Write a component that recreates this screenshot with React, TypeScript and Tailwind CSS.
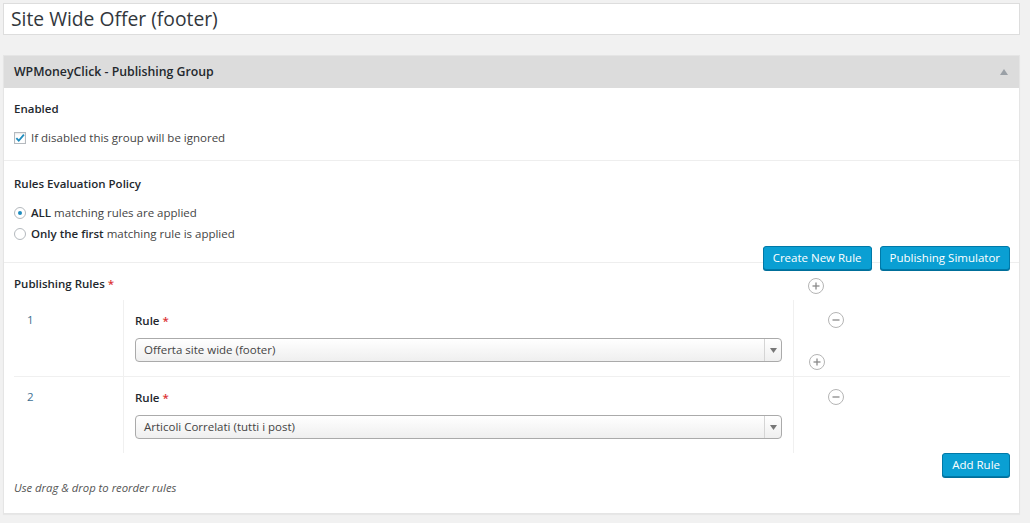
import React from "react";

const font = { fontFamily: '"Open Sans", "Noto Sans", sans-serif' };

const CircleBtn = ({ kind }: { kind: "plus" | "minus" }) => (
  <span className="flex h-[16px] w-[16px] items-center justify-center rounded-full border border-[#b5b5b5] bg-white">
    <svg width="10" height="10" viewBox="0 0 10 10">
      <path d="M1.5 5h7" stroke="#8a8a8a" strokeWidth="1.3" />
      {kind === "plus" && <path d="M5 1.5v7" stroke="#8a8a8a" strokeWidth="1.3" />}
    </svg>
  </span>
);

const BlueButton = ({ children }: { children: React.ReactNode }) => (
  <button className="h-[24px] rounded-[3px] border border-[#0079a8] bg-[#0a9fd3] px-[9px] text-[11.5px] leading-none text-white shadow-[0_1px_0_#006f9a]">
    {children}
  </button>
);

const Select = ({ value }: { value: string }) => (
  <div className="flex h-[24px] items-stretch rounded-[4px] border border-[#aaaaaa] bg-gradient-to-b from-white to-[#efefef]">
    <span className="flex flex-1 items-center pl-[8px] text-[11.5px] text-[#444]">{value}</span>
    <span className="flex w-[17px] items-center justify-center border-l border-[#d5d5d5]">
      <svg width="7" height="5" viewBox="0 0 7 5">
        <path d="M0 0h7L3.5 5z" fill="#777" />
      </svg>
    </span>
  </div>
);

const RuleRow = ({ n, value, last }: { n: number; value: string; last?: boolean }) => (
  <div className={`flex ${last ? "" : "border-b border-[#f0f0f0]"}`}>
    <div className="w-[110px] border-r border-[#f0f0f0] pl-[13px] pt-[12px] text-[11.5px] leading-[16px] text-[#3e6f92]">{n}</div>
    <div className="flex-1 border-r border-[#f0f0f0] px-[11px] pt-[13px] pb-[14px]">
      <div className="text-[11.5px] leading-[16px] font-semibold text-[#23282d]">
        Rule <span className="text-[#dc3232]">*</span>
      </div>
      <div className="mt-[9px]">
        <Select value={value} />
      </div>
    </div>
    <div className="flex w-[216px] flex-col pt-[12px]">
      <div className="pl-[34px]">
        <CircleBtn kind="minus" />
      </div>
      {!last && (
        <div className="mt-[26px] pl-[15px]">
          <CircleBtn kind="plus" />
        </div>
      )}
    </div>
  </div>
);

export default function App() {
  return (
    <div className="h-[523px] w-[1030px] overflow-hidden bg-[#f1f1f1] pt-[3px] pl-[3px] pr-[10px] text-[#444]" style={font}>
      <div className="flex h-[32px] items-center border border-[#dddddd] bg-white pl-[7px] text-[19.3px] text-[#32373c]">
        Site Wide Offer (footer)
      </div>

      <div className="mt-[20px] border border-[#e5e5e5] bg-white shadow-[0_1px_1px_rgba(0,0,0,0.04)]">
        <div className="flex h-[32px] items-center justify-between bg-[#dcdcdc] pl-[10px] pr-[11px]">
          <span className="text-[12.3px] font-semibold text-[#23282d]">WPMoneyClick - Publishing Group</span>
          <svg width="8" height="6" viewBox="0 0 8 6">
            <path d="M0 6L4 0l4 6z" fill="#9aa0a6" />
          </svg>
        </div>

        <div className="border-b border-[#eeeeee] px-[10px] pt-[13px] pb-[14px] text-[11.5px] leading-[16px]">
          <div className="font-semibold text-[#23282d]">Enabled</div>
          <label className="mt-[13px] flex items-center gap-[5px]">
            <span className="flex h-[12px] w-[12px] items-center justify-center border border-[#b4b9be] bg-white shadow-[inset_0_1px_2px_rgba(0,0,0,0.1)]">
              <svg width="11" height="10" viewBox="0 0 11 10">
                <path d="M1.5 5.2l2.6 2.8L9.8 1.2" fill="none" stroke="#1e8cbe" strokeWidth="2" />
              </svg>
            </span>
            If disabled this group will be ignored
          </label>
        </div>

        <div className="flex items-end justify-between border-b border-[#eeeeee] pl-[10px] pr-[9px] pt-[15px] text-[11.5px] leading-[16px]">
          <div className="pb-[20px]">
            <div className="font-semibold text-[#23282d]">Rules Evaluation Policy</div>
            <label className="mt-[13px] flex items-center gap-[5px]">
              <span className="flex h-[12px] w-[12px] items-center justify-center rounded-full border border-[#b4b9be] bg-white">
                <span className="h-[4px] w-[4px] rounded-full bg-[#1e8cbe]" />
              </span>
              <span>
                <b className="font-semibold text-[#23282d]">ALL</b> matching rules are applied
              </span>
            </label>
            <label className="mt-[5px] flex items-center gap-[5px]">
              <span className="h-[12px] w-[12px] rounded-full border border-[#b4b9be] bg-white" />
              <span>
                <b className="font-semibold text-[#23282d]">Only the first</b> matching rule is applied
              </span>
            </label>
          </div>
          <div className="relative z-10 -mb-[8px] flex gap-[8px]">
            <BlueButton>Create New Rule</BlueButton>
            <BlueButton>Publishing Simulator</BlueButton>
          </div>
        </div>

        <div className="pl-[10px] pr-[9px] pt-[13px] pb-[17px]">
          <div className="flex h-[24px] items-start">
            <div className="flex-1 text-[11.5px] leading-[16px] font-semibold text-[#23282d]">
              Publishing Rules <span className="text-[#dc3232]">*</span>
            </div>
            <div className="w-[202px] pt-[2px]">
              <CircleBtn kind="plus" />
            </div>
          </div>

          <div>
            <RuleRow n={1} value="Offerta site wide (footer)" />
            <RuleRow n={2} value="Articoli Correlati (tutti i post)" last />
          </div>

          <div className="flex justify-end">
            <BlueButton>Add Rule</BlueButton>
          </div>
          <div className="mt-[3px] text-[11.3px] leading-[16px] italic text-[#555]">Use drag &amp; drop to reorder rules</div>
        </div>
      </div>
    </div>
  );
}
